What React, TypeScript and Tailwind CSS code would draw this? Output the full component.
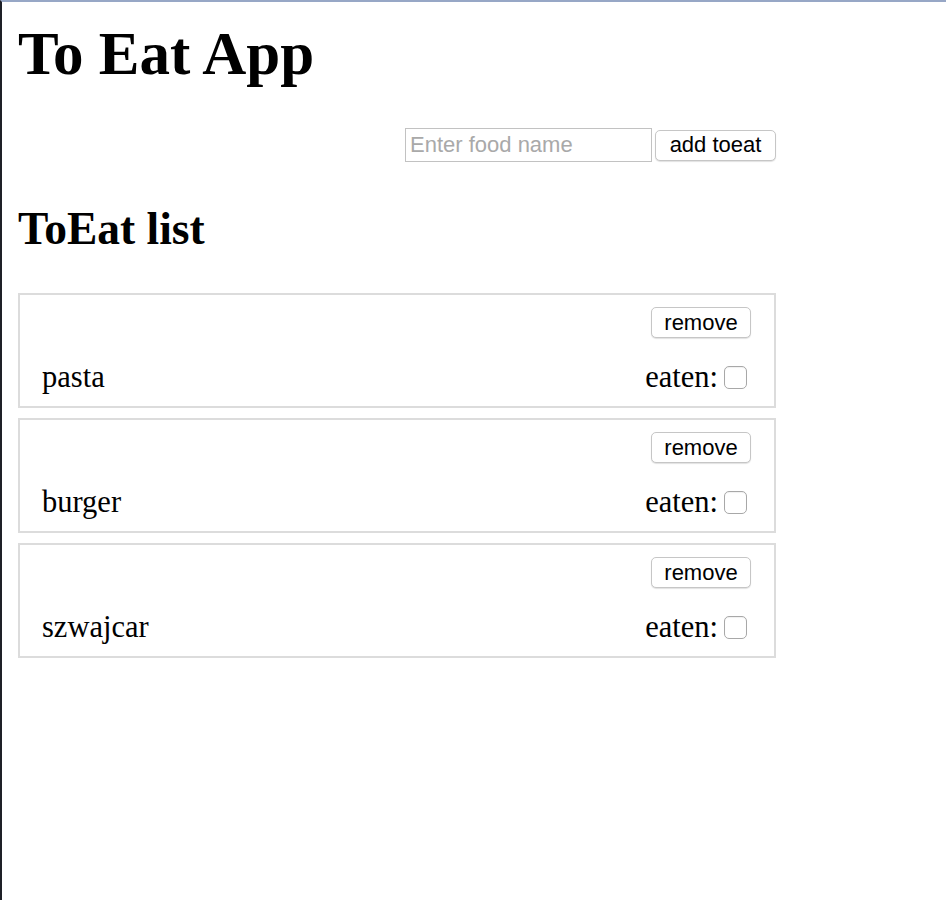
import React from "react";

const items = ["pasta", "burger", "szwajcar"];

const btn =
  "h-[31px] rounded-[5px] border border-[#c6c6c6] bg-white text-[22px] leading-none text-black shadow-[0_1px_1px_rgba(0,0,0,0.12)] [font-family:'Liberation_Sans',Arial,sans-serif]";

function FoodCard({ name }: { name: string }) {
  return (
    <div className="border-2 border-[#dcdcdc] pl-[22px] pr-[23px] pt-[12px] pb-[12px]">
      <div className="flex justify-end">
        <button className={`${btn} w-[100px]`}>remove</button>
      </div>
      <div className="mt-[22px] flex h-[34px] items-center justify-between text-[30.5px] leading-[34px]">
        <span>{name}</span>
        <label className="flex items-center gap-[6px] pr-[4px]">
          <span>eaten:</span>
          <span className="block h-[23px] w-[23px] rounded-[5px] border border-[#a8a8a8] bg-white shadow-[inset_0_1px_1px_rgba(0,0,0,0.06)]" />
        </label>
      </div>
    </div>
  );
}

export default function App() {
  return (
    <div className="min-h-[900px] border-t-2 border-l-2 border-t-[#97a7c6] border-l-[#1e2027] bg-white text-black [font-family:'Liberation_Serif','Times_New_Roman',serif]">
      <div className="w-[774px] pl-[16px]">
        <h1 className="pt-[22px] text-[61px] font-bold leading-[60px]">To Eat App</h1>
        <div className="mt-[44px] flex items-center justify-end gap-[3px]">
          <input
            placeholder="Enter food name"
            className="h-[34px] w-[247px] border border-[#c2c2c2] px-[4px] text-[22px] outline-none placeholder:text-[#a9a9a9] [font-family:'Liberation_Sans',Arial,sans-serif]"
          />
          <button className={`${btn} w-[121px]`}>add toeat</button>
        </div>
        <h2 className="mt-[44px] text-[45.5px] font-bold leading-[45px]">ToEat list</h2>
        <div className="mt-[42px] flex flex-col gap-[10px]">
          {items.map((it) => (
            <FoodCard key={it} name={it} />
          ))}
        </div>
      </div>
    </div>
  );
}
